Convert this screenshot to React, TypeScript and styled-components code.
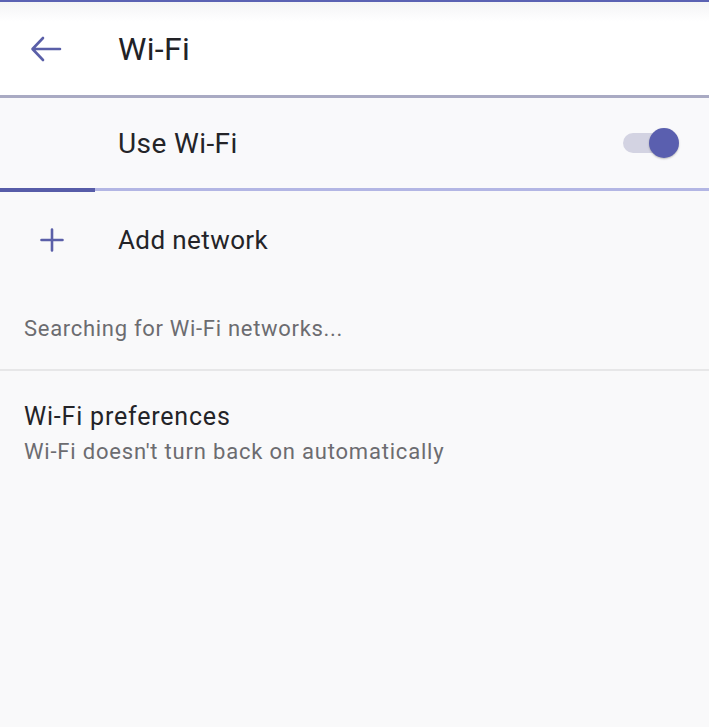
import React from 'react'
import styled, { createGlobalStyle } from 'styled-components'

const GlobalStyle = createGlobalStyle`
  html, body {
    margin: 0;
    padding: 0;
    background: #f9f9fa;
  }

  body {
    font-family: Roboto, "Noto Sans", "Liberation Sans", sans-serif;
    -webkit-font-smoothing: antialiased;
  }
`

const Screen = styled.div`
  width: 709px;
  min-height: 727px;
  background: #f9f9fa;
  border-top: 2px solid #5b62b3;
  box-sizing: border-box;
`

const Header = styled.header`
  height: 96px;
  display: flex;
  align-items: center;
  background: linear-gradient(#f4f4f5 0px, #ffffff 20px);
  border-bottom: 3px solid #a9aac3;
  box-sizing: border-box;
  padding-top: 1px;
`

const IconSlot = styled.div<{ $left: number }>`
  width: 118px;
  flex-shrink: 0;
  display: flex;
  align-items: center;
  padding-left: ${({ $left }) => $left}px;
  box-sizing: border-box;
`

const Title = styled.h1`
  margin: 0;
  font-size: 32px;
  font-weight: 400;
  color: #222226;
  letter-spacing: 0.3px;
`

const ToggleRow = styled.div`
  height: 93px;
  display: flex;
  align-items: center;
  background: #f9f9fb;
  padding-right: 30px;
  position: relative;
  border-bottom: 3px solid #b3b6e4;
  box-sizing: border-box;
`

const Progress = styled.div`
  position: absolute;
  left: 0;
  bottom: -4px;
  width: 95px;
  height: 4px;
  background: #575ca8;
`

const RowLabel = styled.span<{ $size: number }>`
  flex: 1;
  font-size: ${({ $size }) => $size}px;
  letter-spacing: 0.4px;
  color: #242428;
`

const Switch = styled.div`
  position: relative;
  width: 56px;
  height: 30px;
  display: flex;
  align-items: center;
`

const Track = styled.div`
  width: 46px;
  height: 20px;
  border-radius: 10px;
  background: #d3d3e2;
`

const Thumb = styled.div`
  position: absolute;
  right: 0;
  top: 0;
  width: 30px;
  height: 30px;
  border-radius: 50%;
  background: #5a5faf;
  box-shadow: 0 1px 2px rgba(0, 0, 0, 0.25);
`

const ActionRow = styled.div`
  height: 97px;
  display: flex;
  align-items: center;
`

const Status = styled.div`
  padding: 0 24px;
  height: 81px;
  display: flex;
  align-items: center;
  font-size: 22px;
  letter-spacing: 0.7px;
  color: #6c6c70;
  border-bottom: 2px solid #e7e7e8;
`

const Pref = styled.div`
  padding: 31px 24px 0;
  display: flex;
  flex-direction: column;
  gap: 8px;
`

const PrefTitle = styled.div`
  font-size: 25px;
  letter-spacing: 0.8px;
  color: #242428;
`

const PrefSub = styled.div`
  font-size: 22px;
  letter-spacing: 0.8px;
  color: #6c6c70;
`

export default function App() {
  return (
    <Screen>
      <GlobalStyle />
      <Header>
        <IconSlot $left={30}>
          <svg width="32" height="26" viewBox="0 0 32 26" fill="none">
            <path d="M30 13H3M13 2L2.5 13L13 24" stroke="#5a5fa8" strokeWidth="2.6" strokeLinecap="round" strokeLinejoin="round" />
          </svg>
        </IconSlot>
        <Title>Wi-Fi</Title>
      </Header>
      <ToggleRow>
        <IconSlot $left={0} />
        <RowLabel $size={28}>Use Wi-Fi</RowLabel>
        <Switch>
          <Track />
          <Thumb />
        </Switch>
        <Progress />
      </ToggleRow>
      <ActionRow>
        <IconSlot $left={40}>
          <svg width="24" height="24" viewBox="0 0 24 24" fill="none">
            <path d="M12 1.5V22.5M1.5 12H22.5" stroke="#5a5fa8" strokeWidth="2.6" strokeLinecap="round" />
          </svg>
        </IconSlot>
        <RowLabel $size={26}>Add network</RowLabel>
      </ActionRow>
      <Status>Searching for Wi-Fi networks...</Status>
      <Pref>
        <PrefTitle>Wi-Fi preferences</PrefTitle>
        <PrefSub>Wi-Fi doesn't turn back on automatically</PrefSub>
      </Pref>
    </Screen>
  )
}
